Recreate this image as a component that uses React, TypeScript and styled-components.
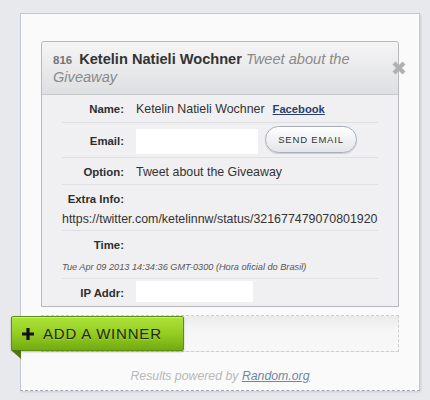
import React from "react";
import styled, { createGlobalStyle } from "styled-components";

const GlobalStyle = createGlobalStyle`
  html, body { margin: 0; padding: 0; }
  body {
    background: #e8e9ed;
    font-family: "Liberation Sans", Arial, sans-serif;
    color: #333;
  }
`;

const Page = styled.div`
  padding: 13px 0 10px 20px;
`;

const Card = styled.div`
  width: 400px;
  box-sizing: border-box;
  background: #fafafa;
  border: 1px solid #c4c6d3;
  border-bottom: 1px dashed #a3a6b4;
  box-shadow: 1px 1px 2px rgba(0, 0, 0, 0.12);
  padding: 27px 20px 6px;
`;

const Panel = styled.div`
  position: relative;
  width: 358px;
  box-sizing: border-box;
  border: 1px solid #b7b8bc;
  border-radius: 3px 3px 0 0;
  background: #f0f0f2;
`;

const Header = styled.div`
  padding: 9px 30px 8px 11px;
  background: linear-gradient(#f5f5f6, #dedfe1);
  border-bottom: 1px solid #c9cacd;
  border-radius: 3px 3px 0 0;
  font-size: 14.6px;
  line-height: 17px;
`;

const Num = styled.span`
  display: inline-block;
  font-size: 11.5px;
  font-weight: bold;
  color: #757575;
  margin-right: 7px;
`;

const HeadName = styled.span`
  font-weight: bold;
  color: #333;
`;

const HeadOption = styled.span`
  font-style: italic;
  color: #8a8a8a;
`;

const Close = styled.svg`
  position: absolute;
  top: 18px;
  right: -9px;
  width: 16px;
  height: 16px;
`;

const Body = styled.div`
  padding: 0 20px;
`;

const Row = styled.div<{ $pad: string }>`
  display: grid;
  grid-template-columns: 62px 1fr;
  column-gap: 12px;
  align-items: start;
  padding: ${(p) => p.$pad};
  border-bottom: 1px solid #e0e0e3;
  &:last-child {
    border-bottom: none;
  }
`;

const Label = styled.div<{ $top?: number }>`
  text-align: right;
  font-weight: bold;
  font-size: 11.4px;
  line-height: 16px;
  color: #2e2e2e;
  white-space: nowrap;
  padding-top: ${(p) => p.$top ?? 0}px;
`;

const Value = styled.div`
  display: flex;
  align-items: flex-start;
  gap: 8px;
  font-size: 12.4px;
  line-height: 16px;
  color: #333;
  white-space: nowrap;
`;

const Wide = styled.div<{ $gap: number }>`
  grid-column: 1 / span 2;
  margin-top: ${(p) => p.$gap}px;
  font-size: 12.4px;
  line-height: 16px;
  color: #333;
  white-space: nowrap;
`;

const DateLine = styled(Wide)`
  font-size: 9.2px;
  line-height: 14px;
  font-style: italic;
  color: #555;
`;

const Link = styled.a`
  font-size: 11.2px;
  font-weight: bold;
  color: #2a3f6c;
  text-decoration: underline;
`;

const Field = styled.div<{ $w: number; $h: number; $top: number }>`
  width: ${(p) => p.$w}px;
  height: ${(p) => p.$h}px;
  margin-top: ${(p) => p.$top}px;
  background: #fff;
`;

const PillButton = styled.button`
  width: 92px;
  height: 27px;
  margin-top: 3px;
  margin-left: -1px;
  box-sizing: border-box;
  border: 1px solid #a9aebc;
  border-radius: 14px;
  background: linear-gradient(#ffffff, #e3e5e9);
  box-shadow: 0 1px 1px rgba(0, 0, 0, 0.15);
  font-family: "Liberation Sans", Arial, sans-serif;
  font-size: 9.5px;
  letter-spacing: 0.8px;
  color: #333;
  padding: 0;
`;

const DropZone = styled.div`
  position: relative;
  margin-top: 8px;
  width: 358px;
  height: 37px;
  box-sizing: border-box;
  border: 1px dashed #cfcfd2;
  background: linear-gradient(#ebebeb, #f6f6f6 40%, #f8f8f8);
`;

const WinnerButton = styled.button`
  position: absolute;
  left: -31px;
  top: 0;
  width: 173px;
  height: 35px;
  box-sizing: border-box;
  display: flex;
  align-items: center;
  gap: 9px;
  padding: 0 0 0 10px;
  border: 1px solid #5d8f13;
  border-radius: 2px;
  background: linear-gradient(#aee23a, #95cd22 50%, #72aa12);
  box-shadow: inset 0 1px 0 rgba(255, 255, 255, 0.35), 0 1px 2px rgba(0, 0, 0, 0.25);
  font-family: "Liberation Sans", Arial, sans-serif;
  font-size: 15px;
  letter-spacing: 0.8px;
  color: #1c2a08;
  text-shadow: 0 1px 0 rgba(255, 255, 255, 0.25);
  &::after {
    content: "";
    position: absolute;
    left: -1px;
    top: 100%;
    width: 0;
    height: 0;
    border-top: 9px solid #4b7613;
    border-left: 10px solid transparent;
  }
`;

const Footer = styled.div`
  margin-top: 16px;
  text-align: center;
  font-size: 12.3px;
  line-height: 16px;
  font-style: italic;
  color: #b8b8b8;
`;

const FooterLink = styled.a`
  color: #6d86a8;
  text-decoration: underline;
`;

export default function App() {
  return (
    <>
      <GlobalStyle />
      <Page>
        <Card>
          <Panel>
            <Header>
              <Num>816</Num>
              <HeadName>Ketelin Natieli Wochner</HeadName>{" "}
              <HeadOption>Tweet about the Giveaway</HeadOption>
            </Header>
            <Close viewBox="0 0 16 16">
              <path d="M3 3 L13 13 M13 3 L3 13" stroke="#b1b1b1" strokeWidth="4.2" strokeLinecap="butt" fill="none" />
            </Close>
            <Body>
              <Row $pad="6px 0 5px">
                <Label>Name:</Label>
                <Value>
                  <span>Ketelin Natieli Wochner</span>
                  <Link href="#">Facebook</Link>
                </Value>
              </Row>
              <Row $pad="0 0 3px">
                <Label $top={10}>Email:</Label>
                <Value>
                  <Field $w={122} $h={25} $top={6} />
                  <PillButton>SEND EMAIL</PillButton>
                </Value>
              </Row>
              <Row $pad="6px 0 4px">
                <Label>Option:</Label>
                <Value>Tweet about the Giveaway</Value>
              </Row>
              <Row $pad="6px 0 3px">
                <Label>Extra Info:</Label>
                <Wide $gap={4}>https://twitter.com/ketelinnw/status/321677479070801920</Wide>
              </Row>
              <Row $pad="6px 0 4px">
                <Label>Time:</Label>
                <DateLine $gap={7}>Tue Apr 09 2013 14:34:36 GMT-0300 (Hora oficial do Brasil)</DateLine>
              </Row>
              <Row $pad="0 0 4px">
                <Label $top={6}>IP Addr:</Label>
                <Value>
                  <Field $w={117} $h={21} $top={2} />
                </Value>
              </Row>
            </Body>
          </Panel>
          <DropZone>
            <WinnerButton>
              <svg width="12" height="12" viewBox="0 0 12 12">
                <path d="M6 0 V12 M0 6 H12" stroke="#111" strokeWidth="3.2" fill="none" />
              </svg>
              <span>ADD A WINNER</span>
            </WinnerButton>
          </DropZone>
          <Footer>
            Results powered by <FooterLink href="#">Random.org</FooterLink>
          </Footer>
        </Card>
      </Page>
    </>
  );
}
